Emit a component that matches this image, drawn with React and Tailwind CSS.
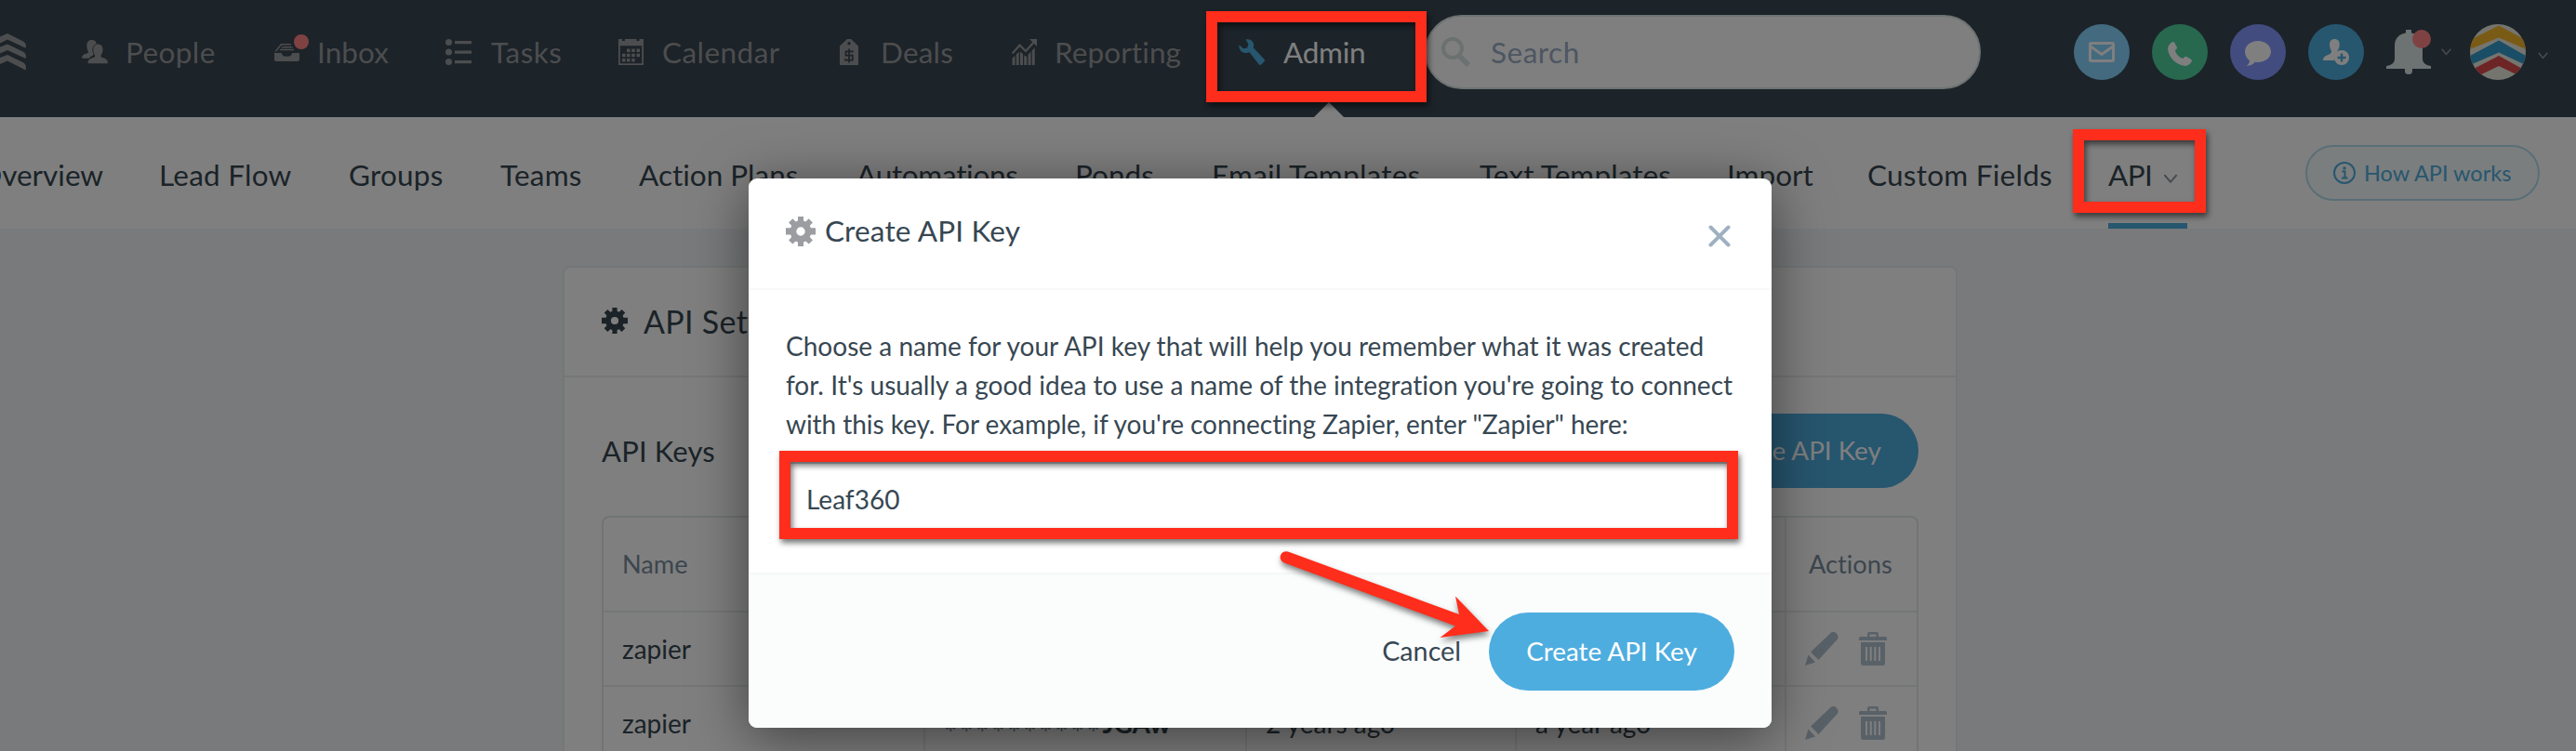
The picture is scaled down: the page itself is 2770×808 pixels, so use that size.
import React from "react";

function Gear({ className }) {
  return (
    <svg viewBox="0 0 32 32" className={className} fill="currentColor">
      <path fillRule="evenodd" d="M13 0h6v4.4l2.4 1 3.3-3.2 4.2 4.2-3.1 3.3 1 2.5H32v7.4h-5.2l-1 2.4 3.1 3.4-4.2 4.2-3.3-3.1-2.4 1V32h-6v-4.5l-2.4-1-3.3 3.1-4.2-4.2 3.1-3.4-1-2.4H0v-7.4h5.2l1-2.5-3.1-3.3 4.2-4.2 3.3 3.2 2.4-1zM16 11.3a4.7 4.7 0 1 0 0 9.4 4.7 4.7 0 0 0 0-9.4z" />
    </svg>
  );
}

function Chevron({ className }) {
  return (
    <svg viewBox="0 0 14 10" className={className} fill="none" stroke="currentColor" strokeWidth="1.8">
      <path d="M1 1l6 7 6-7" />
    </svg>
  );
}

function PeopleIcon() {
  return (
    <svg viewBox="0 0 28 26" className="h-[26px] w-7" fill="currentColor">
      <path d="M10.5 0c3 0 5 1.600 5.300 4.200C13 5 11.400 7.200 11.400 10.200c0 2 .5 4 1.400 5.400-.8 1.400-3.600 2.200-5 4.100H0c0-3.500 2.500-4.300 5.300-5.200 1.500-.5 1.900-1.200 1.400-2.500C5.800 10.400 5.300 8.500 5.300 6c0-3.500 1.800-6 5.200-6z" />
      <path d="M17.500 4.500c3.200 0 5 2.300 5 5.700 0 2.300-.7 4.400-1.900 6-.5 1.600 0 2.300 1.700 2.900 3.200 1.100 5.700 2 5.700 6.200H6.500c0-4.200 2.500-5.100 5.700-6.200 1.700-.6 2.300-1.300 1.800-2.900-1.200-1.600-1.700-3.700-1.700-6 0-3.400 2-5.700 5.200-5.700z" />
    </svg>
  );
}

function InboxIcon() {
  return (
    <span className="relative block h-[19px] w-[27px]">
      <svg viewBox="0 0 27 19" className="h-[19px] w-[27px]" fill="currentColor">
        <path d="M7 0h11v1.500H8L2 8.500H.3zM8.500 3h11v1.500h-12zM6.500 5.800h14.500v1.500H5.500z" />
        <path d="M0 10h7c.8 0 1 .6 1.300 1.300.7 1.700 1.700 2.500 5.200 2.500s4.500-.8 5.200-2.500c.3-.7.500-1.300 1.300-1.300h7v7a2 2 0 0 1-2 2H2a2 2 0 0 1-2-2z" />
      </svg>
      <span className="absolute -top-[10px] left-[21px] h-4 w-4 rounded-full bg-[#ff8484]" />
    </span>
  );
}

function TasksIcon() {
  return (
    <svg viewBox="0 0 28 28" className="h-7 w-7" fill="currentColor">
      <circle cx="3.500" cy="3.500" r="3.500" />
      <circle cx="3.500" cy="14" r="3.500" />
      <circle cx="3.500" cy="24.500" r="3.500" />
      <path d="M10 2h18v3.200H10zM10 12.500h18v3.200H10zM10 23h18v3.200H10z" />
    </svg>
  );
}

function CalendarIcon() {
  return (
    <svg viewBox="0 0 27 28" className="h-7 w-[27px]" fill="currentColor">
      <path fillRule="evenodd" d="M0 0h4v2h3V0h12.500v2h3V0H27v28H0zM1.800 7.300v19h23.400v-19z" />
      <path d="M9 10.500h3.500v3.500H9zM14.200 10.500h3.500v3.500h-3.500zM19.500 10.500h3.500v3.500h-3.500zM4 15.800h3.500v3.500H4zM9 15.800h3.500v3.500H9zM14.200 15.800h3.500v3.500h-3.500zM19.500 15.800h3.500v3.500h-3.500zM4 21h3.500v3.500H4zM9 21h3.500v3.500H9zM14.200 21h3.500v3.500h-3.500z" />
    </svg>
  );
}

function DealsIcon() {
  return (
    <svg viewBox="0 0 20 28" className="h-7 w-5">
      <path fill="currentColor" fillRule="evenodd" d="M8 0h4l8 7.500V28H0V7.500zM10 3a1.700 1.700 0 1 0 0 3.400A1.700 1.700 0 0 0 10 3z" />
      <path fill="none" stroke="#384652" strokeWidth="1.700" d="M13.800 14.500v-1.200H6.500v4.400h7.300v5H6v-1.500M10 10.500v15" />
    </svg>
  );
}

function ReportIcon() {
  return (
    <svg viewBox="0 0 27 28" className="h-7 w-[27px]" fill="currentColor">
      <path d="M.5 20.500l3-2.500v10h-3zM4.700 16.500l3-2.800V28h-3zM9 13.500l3 2.500v12H9zM13.200 17.500l3 1.500v9h-3zM17.500 17l3-3.500V28h-3zM21.700 12.500l3-3.500v19h-3z" />
      <path fill="none" stroke="currentColor" strokeWidth="2.200" d="M.5 15.500l8-8.800 6.500 6.300 9-10" />
      <path d="M19 0h8v8z" />
    </svg>
  );
}

function WrenchIcon() {
  return (
    <svg viewBox="0 0 28 28" className="h-7 w-7 text-[#4eaddf]">
      <path fill="currentColor" d="M7.500.6C11 -.5 15 1.200 16 5c.4 1.600.2 3-.3 4.300L27.300 21.500c.9 1 .9 1.900 0 2.900l-2.800 2.900c-.9.9-1.900.9-2.800 0L11.500 14.300C7.200 16.300 2.600 14.500.9 10.500.3 9 .2 7.500.5 6.200l4.400 4.100 4.300-.8 1.200-4z" />
    </svg>
  );
}

const NAV = [
  { label: "People", icon: <PeopleIcon />, box: "w-[207px]", slot: "w-[47px]", text: "tracking-[0.4px]" },
  { label: "Inbox", icon: <InboxIcon />, box: "w-[184px]", slot: "w-[46px]", text: "tracking-[0.1px]" },
  { label: "Tasks", icon: <TasksIcon />, box: "w-[186px]", slot: "w-[49px]", text: "tracking-[0.5px]" },
  { label: "Calendar", icon: <CalendarIcon />, box: "w-[238px]", slot: "w-[47px]", text: "tracking-[0.45px]" },
  { label: "Deals", icon: <DealsIcon />, box: "w-[185px]", slot: "w-[44px]", text: "tracking-[0.2px]" },
  { label: "Reporting", icon: <ReportIcon />, box: "w-[244px]", slot: "w-[46px]", text: "tracking-[0.1px]" },
];

const TABS = [
  { label: "Overview", box: "w-[194px]", text: "" },
  { label: "Lead Flow", box: "w-[204px]", text: "tracking-[0.25px]" },
  { label: "Groups", box: "w-[163px]", text: "tracking-[0.2px]" },
  { label: "Teams", box: "w-[149px]", text: "tracking-[0.2px]" },
  { label: "Action Plans", box: "w-[234px]", text: "" },
  { label: "Automations", box: "w-[235px]", text: "tracking-[-0.3px]" },
  { label: "Ponds", box: "w-[147px]", text: "" },
  { label: "Email Templates", box: "w-[288px]", text: "tracking-[0.25px]" },
  { label: "Text Templates", box: "w-[266px]", text: "tracking-[0.1px]" },
  { label: "Import", box: "w-[151px]", text: "" },
  { label: "Custom Fields", box: "w-[259px]", text: "tracking-[0.25px]" },
];

function Header() {
  return (
    <header className="h-[126px] bg-[#384652] text-[31.5px] leading-10 text-[#999a9c]">
      <div className="flex h-28 items-center">
        <svg viewBox="0 0 28 40" className="mr-[60px] h-10 w-7 shrink-0" fill="currentColor">
          <path d="M0 3.500L8 0l17 8.500c2.500 1.500 3.500 4 2.600 7.200L8 6.500 0 10.500z" />
          <path d="M0 14.500L8 11.500l17 8.300c2.500 1.500 3.500 4 2.600 7.200L8 18 0 21.500z" />
          <path d="M0 26L8 23l17 8.300c2.500 1.500 3.500 4.500 2.600 8.200L8 29.500 0 33z" />
        </svg>
        {NAV.map((n) => (
          <div key={n.label} className={"flex shrink-0 items-center " + n.box}>
            <span className={"shrink-0 " + n.slot}>{n.icon}</span>
            <span className={"whitespace-nowrap " + n.text}>{n.label}</span>
          </div>
        ))}
        <div className="relative flex h-28 w-[200px] shrink-0 items-center text-white">
          <span className="w-[48px]"><WrenchIcon /></span>
          <span className="tracking-[-0.25px]">Admin</span>
          <svg viewBox="0 0 32 16" className="absolute -bottom-[14px] left-[81px] h-4 w-8" fill="#fff">
            <path d="M16 0l16 16H0z" />
          </svg>
        </div>
        <div className="flex h-20 w-[598px] shrink-0 items-center rounded-full border-2 border-[#dae4e4] bg-white pl-4">
          <svg viewBox="0 0 31 32" className="h-8 w-[31px]" fill="none" stroke="#d6e0e0">
            <circle cx="12" cy="12" r="10" strokeWidth="4" />
            <path d="M19 20l10 10" strokeWidth="5.500" />
          </svg>
          <span className="ml-[22px] tracking-[0.5px] text-[#9aacc4]">Search</span>
        </div>
        <div className="ml-[100px] flex shrink-0 items-center gap-6">
          <span className="flex h-[60px] w-[60px] items-center justify-center rounded-full bg-[#86d4ff]">
            <svg viewBox="0 0 28 22" className="h-[22px] w-7" fill="none" stroke="#fff" strokeWidth="3">
              <rect x="1.500" y="1.500" width="25" height="19" rx="1" />
              <path d="M2 5l12 8.500L26 5" />
            </svg>
          </span>
          <span className="flex h-[60px] w-[60px] items-center justify-center rounded-full bg-[#4ed09e]">
            <svg viewBox="0 0 26 26" className="mt-1 h-[26px] w-[26px]" fill="#fff">
              <path d="M4.500.4c1-.8 2.200-.3 2.900.8l2.400 4.300c.5 1 .2 1.700-.5 2.300-1.400 1.100-1.500 1.800-1 3 1.300 2.900 3.700 5.300 6.600 6.700 1.200.6 1.800.2 3-1.100.7-.8 1.500-1 2.400-.5l4.600 2.900c1 .7 1.200 1.600.7 2.500-1.500 3.200-4.700 5.100-8.100 4.500C9 24.500 1.500 17 .2 8.700-.4 5 1.800 2 4.500.4z" />
            </svg>
          </span>
          <span className="flex h-[60px] w-[60px] items-center justify-center rounded-full bg-[#8498ff]">
            <svg viewBox="0 0 28 27" className="mt-[2px] h-[27px] w-7" fill="#fff">
              <path d="M14 0c7.700 0 14 5 14 11.500S21.700 23 14 23c-1.200 0-2.300-.1-3.300-.3-1.700 2.500-4.500 3.900-9.200 4 2.200-1.300 3.300-3 3.500-5.500C2 19 0 15.500 0 11.500 0 5 6.300 0 14 0z" />
            </svg>
          </span>
          <span className="flex h-[60px] w-[60px] items-center justify-center rounded-full bg-[#4eaddf]">
            <svg viewBox="0 0 28 28" className="h-7 w-7" fill="#fff">
              <path d="M12.500 0c3.300 0 5.300 2.300 5.300 5.800 0 2.400-.8 4.600-2 6.200-.6 1.200-.3 1.900.7 2.300-3.300 1.800-4.800 4.800-4 8.700H0c0-3.800 2.500-5 6-6.200 2.500-.9 3.400-2.300 2.800-4.300C7.700 10.900 7 8.500 7 5.800 7 2.300 9 0 12.500 0z" />
              <circle cx="20" cy="20" r="8" />
              <path fill="none" stroke="#4eaddf" strokeWidth="2.400" d="M15.500 20h9M20 15.500v9" />
            </svg>
          </span>
        </div>
        <div className="relative ml-6 shrink-0">
          <svg viewBox="0 0 48 48" className="h-12 w-12" fill="#dae4e4">
            <path d="M21 0h6v3.500C34 4.500 39 9 39 17v14c0 4 2.500 7 9 8v3H0v-3c6.500-1 9-4 9-8V17C9 9 14 4.500 21 3.500zM20 42h8v2.500a4 3.500 0 0 1-8 0z" />
          </svg>
          <span className="absolute left-7 top-0 h-5 w-5 rounded-full bg-[#ff8484]" />
        </div>
        <Chevron className="ml-[10px] h-2 w-[13px] shrink-0" />
        <svg viewBox="0 0 60 60" className="ml-[19px] h-[60px] w-[60px] shrink-0">
          <clipPath id="avatar"><circle cx="30" cy="30" r="30" /></clipPath>
          <g clipPath="url(#avatar)">
            <rect width="60" height="60" fill="#ebebe0" />
            <path fill="#f4b62c" d="M0 17L31 1.500 60 17v10L31 14.500 0 27z" />
            <path fill="#329dcc" d="M0 34L31 17.500 60 34v10L31 30.500 0 44z" />
            <path fill="#dd4a4c" d="M0 50L31 34 60 50v9L31 45 0 60z" />
          </g>
        </svg>
        <Chevron className="ml-[12px] mt-2 h-2 w-[13px] shrink-0" />
      </div>
    </header>
  );
}

function SubNav() {
  return (
    <nav className="flex h-[120px] bg-white text-[31.5px] leading-10 text-[#374750]">
      <div className="-ml-[23px] flex items-center pt-1">
        {TABS.map((t) => (
          <span key={t.label} className={"shrink-0 whitespace-nowrap " + t.box + " " + t.text}>{t.label}</span>
        ))}
      </div>
      <div className="flex h-[120px] w-[85px] shrink-0 items-center border-b-[6px] border-[#4eaddf] pt-[10px]">
        <span className="tracking-[-0.6px]">API</span>
        <Chevron className="ml-3 mt-[9px] h-[11px] w-4 text-[#8a9499]" />
      </div>
      <div className="ml-[127px] mt-[30px] flex h-[60px] w-[252px] shrink-0 items-center rounded-full border-2 border-[#b4dcf0] bg-[#f5fcfd] pl-7 text-[#4eaddf]">
        <svg viewBox="0 0 24 24" className="mr-[9px] h-6 w-6" fill="none" stroke="currentColor" strokeWidth="2">
          <circle cx="12" cy="12" r="11" />
          <path d="M9.500 10.500h3V17M9 17.500h6.500" />
          <path d="M12 5.500v3" strokeWidth="3" />
        </svg>
        <span className="whitespace-nowrap text-[23.5px]">How API works</span>
      </div>
    </nav>
  );
}

function RowActions() {
  return (
    <div className="flex items-center gap-[22px] pl-5 text-[#b2c2d0]">
      <svg viewBox="0 0 36 36" className="h-9 w-9" fill="currentColor">
        <path d="M27 1.500c2-2 4.700-1.800 6.700 0 2.300 2.200 2.500 5 .5 7L14.500 30 6 21.500zM3.500 24.500l7.500 8L0 36z" />
      </svg>
      <svg viewBox="0 0 30 36" className="h-9 w-[30px]">
        <path fill="currentColor" fillRule="evenodd" d="M9 5V2q0-2 2-2h8q2 0 2 2v3h7.500q1.500 0 1.500 1.500V9H0V6.500Q0 5 1.500 5zM11.500 5h7V2.500h-7zM2 11h26v22.500q0 2.500-2.500 2.500h-21Q2 36 2 33.500z" />
        <path stroke="#fff" strokeWidth="2" d="M8 16v15M12.700 16v15M17.300 16v15M22 16v15" />
      </svg>
    </div>
  );
}

const GRID = "grid grid-cols-[346px_346px_290px_290px_1fr]";
const CELL = "flex items-center border-r-2 border-[#e9edef] pl-5";

function Row({ stamp }) {
  return (
    <div className={GRID + " h-20 border-b-2 border-[#e9edef]"}>
      <div className={CELL}>zapier</div>
      <div className={CELL}>
        <span className="mt-[21px] text-[34px] leading-8 tracking-[2.600px] text-[#788c9c]">**********</span>
        <span className="font-bold">JGAw</span>
      </div>
      <div className={CELL}>{stamp[0]}</div>
      <div className={CELL}>{stamp[1]}</div>
      <RowActions />
    </div>
  );
}

function SettingsCard() {
  return (
    <section className="ml-[605px] mt-[40px] w-[1500px] rounded-lg border-2 border-[#e9edef] bg-white text-[#374750]">
      <div className="flex h-[118px] items-center border-b-2 border-[#e9edef] pb-[2px] pl-10 text-[34px]">
        <Gear className="mr-[17px] h-7 w-7" />
        <h1 className="tracking-[0.3px]">API Settings</h1>
      </div>
      <div className="px-10 pt-[39px]">
        <div className="flex h-20 items-center justify-between">
          <h2 className="text-[31px] tracking-[0.15px]">API Keys</h2>
          <button className="h-20 w-[264px] rounded-full bg-[#4eaddf] text-[27.8px] text-white">Create API Key</button>
        </div>
        <div className="mt-[30px] rounded-t-lg border-2 border-[#e3e9eb] text-[28px]">
          <div className={GRID + " h-[102px] border-b-2 border-[#e9edef] text-[27.2px] text-[#788c9c]"}>
            <div className={CELL}>Name</div>
            <div className={CELL}>Key</div>
            <div className={CELL}>Created</div>
            <div className={CELL}>Last Used</div>
            <div className="flex items-center pl-6">Actions</div>
          </div>
          <Row stamp={["2 years ago", "a year ago"]} />
          <Row stamp={["2 years ago", "a year ago"]} />
        </div>
      </div>
    </section>
  );
}

function Dialog() {
  return (
    <div className="absolute inset-0 flex items-start bg-black/50 pl-[805px] pt-[192px]">
      <div role="dialog" className="w-[1100px] overflow-hidden rounded-[9px] bg-white text-[#374752] shadow-[0_10px_60px_rgba(0,0,0,0.5)]">
        <div className="flex h-[120px] items-center border-b-2 border-[#f7f8f9] pb-[5px] pl-10">
          <Gear className="h-8 w-8 text-[#9b9da0]" />
          <h2 className="ml-[10px] flex-1 text-[31.5px] tracking-[0.15px]">Create API Key</h2>
          <svg viewBox="0 0 24 24" className="mr-11 mt-[10px] h-6 w-6" fill="none" stroke="#9fb1c1" strokeWidth="4" strokeLinecap="round">
            <path d="M2.500 2.500l19 19M21.500 2.500l-19 19" />
          </svg>
        </div>
        <div className="px-10 pb-[39px] pt-[39px] text-[28px] leading-[42px]">
          <p className="whitespace-nowrap tracking-[0.02px]">
            Choose a name for your API key that will help you remember what it was created<br />
            for. It's usually a good idea to use a name of the integration you're going to connect<br />
            <span className="tracking-[-0.05px]">with this key. For example, if you're connecting Zapier, enter "Zapier" here:</span>
          </p>
          <div className="mt-[20px] flex h-20 items-center rounded border-2 border-[#c8d2d8] pl-5">Leaf360</div>
        </div>
        <div className="flex h-[167px] items-center justify-end gap-[30px] border-t-2 border-[#f6f8f8] bg-[#fbfdfd] pr-10">
          <span className="text-[28.7px]">Cancel</span>
          <button className="h-[84px] w-[264px] rounded-full bg-[#4eaddf] text-[27.8px] text-white">Create API Key</button>
        </div>
      </div>
    </div>
  );
}

function Annotations() {
  return (
    <>
      <div className="absolute left-[1297px] top-[12px] h-[98px] w-[237px] border-[12px] border-[#ff2d1b] drop-shadow-[2px_4px_3px_rgba(0,0,0,0.55)]" />
      <div className="absolute left-[2229px] top-[139px] h-[90px] w-[143px] border-[12px] border-[#ff2d1b] drop-shadow-[2px_4px_3px_rgba(0,0,0,0.55)]" />
      <div className="absolute left-[838px] top-[485px] h-[95px] w-[1031px] border-[12px] border-[#ff2d1b] drop-shadow-[2px_4px_3px_rgba(0,0,0,0.55)]" />
      <svg viewBox="0 0 230 96" className="absolute left-[1374px] top-[592px] h-24 w-[230px] drop-shadow-[1px_4px_3px_rgba(0,0,0,0.5)]" fill="#ff2d1b">
        <path d="M11 1.500L195 69 191 49.500 227 87 174.500 94 191 81.500 7 13.500A6.300 6.300 0 0 1 11 1.500z" />
      </svg>
    </>
  );
}

export default function App() {
  return (
    <div className="relative h-[808px] w-[2770px] overflow-hidden bg-[#f2f4f8] font-['Lato','Open_Sans',sans-serif] [font-variant-ligatures:none]">
      <Header />
      <SubNav />
      <SettingsCard />
      <Dialog />
      <Annotations />
    </div>
  );
}
